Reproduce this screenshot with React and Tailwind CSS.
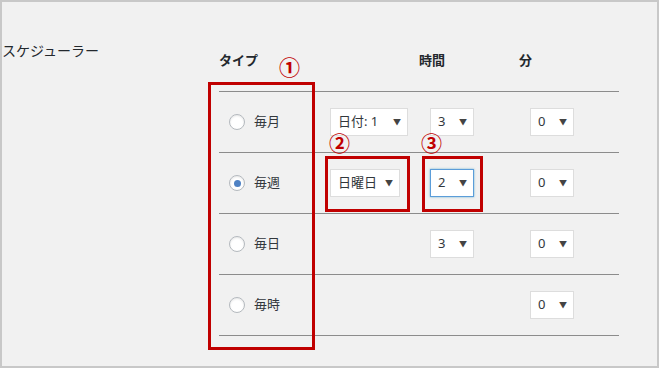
import React from 'react'

function Select({ value, width, focus }) {
  return (
    <div
      className={`h-[28px] ${width} flex items-center justify-between pl-[7px] pr-[6px] bg-white border ${
        focus ? 'border-[#5b9dd9] shadow-[0_0_2px_rgba(30,140,190,0.6)]' : 'border-[#dddddd]'
      } text-[13px] text-[#32373c]`}
    >
      <span>{value}</span>
      <span className="text-[8px] text-[#444]">▼</span>
    </div>
  )
}

function Radio({ checked }) {
  return (
    <span className="w-[16px] h-[16px] rounded-full bg-white border border-[#b4b9be] shadow-[inset_0_1px_2px_rgba(0,0,0,0.1)] flex items-center justify-center">
      {checked && <span className="w-[7px] h-[7px] rounded-full bg-[#4f82c4]" />}
    </span>
  )
}

const rows = [
  { label: '毎月', checked: false, day: { value: '日付: 1', width: 'w-[78px]' }, hour: '3', min: '0' },
  { label: '毎週', checked: true, day: { value: '日曜日', width: 'w-[70px]' }, hour: '2', focus: true, min: '0' },
  { label: '毎日', checked: false, hour: '3', min: '0' },
  { label: '毎時', checked: false, min: '0' },
]

function Circled({ children, className }) {
  return (
    <span
      className={`absolute text-[21px] leading-none font-bold text-[#c00000] font-['Noto_Sans_CJK_JP',sans-serif] ${className}`}
    >
      {children}
    </span>
  )
}

export default function App() {
  return (
    <div className="w-[660px] h-[368px] bg-white font-['Noto_Sans','Noto_Sans_CJK_JP',sans-serif]">
      <div className="relative w-[659px] h-[368px] bg-[#f1f1f1] border-2 border-[#c8c8c8] box-border">
        <div className="absolute inset-0 flex">
          {/* label column */}
          <div className="w-[219px] shrink-0 pt-[36px]">
            <span className="text-[14px] leading-[20px] text-[#23282d]">スケジューラー</span>
          </div>

          {/* table */}
          <div className="w-[400px] pt-[48px] -ml-[2px]">
            <div className="grid grid-cols-[200px_100px_100px] h-[41px] pt-[1px] text-[13px] leading-[19px] font-bold text-[#23282d]">
              <span>タイプ</span>
              <span>時間</span>
              <span>分</span>
            </div>
            {rows.map((r, i) => (
              <div
                key={r.label}
                className={`grid grid-cols-[111px_100px_100px_89px] items-center border-t border-[#8c8c8c] ${
                  i === rows.length - 1 ? 'h-[62px] border-b' : 'h-[61px]'
                }`}
              >
                <div className="flex items-center gap-[9px] pl-[10px]">
                  <Radio checked={r.checked} />
                  <span className="text-[13px] text-[#32373c]">{r.label}</span>
                </div>
                <div>{r.day && <Select value={r.day.value} width={r.day.width} />}</div>
                <div>{r.hour && <Select value={r.hour} width="w-[44px]" focus={r.focus} />}</div>
                <div>{r.min && <Select value={r.min} width="w-[44px]" />}</div>
              </div>
            ))}
          </div>
        </div>

        {/* annotations */}
        <div className="absolute left-[206px] top-[80px] w-[107px] h-[268px] border-[3px] border-[#c00000]" />
        <div className="absolute left-[323px] top-[154px] w-[85px] h-[56px] border-[3px] border-[#c00000]" />
        <div className="absolute left-[420px] top-[154px] w-[61px] h-[56px] border-[3px] border-[#c00000]" />
        <Circled className="left-[277px] top-[54px]">①</Circled>
        <Circled className="left-[327px] top-[130px]">②</Circled>
        <Circled className="left-[419px] top-[130px]">③</Circled>
      </div>
    </div>
  )
}
